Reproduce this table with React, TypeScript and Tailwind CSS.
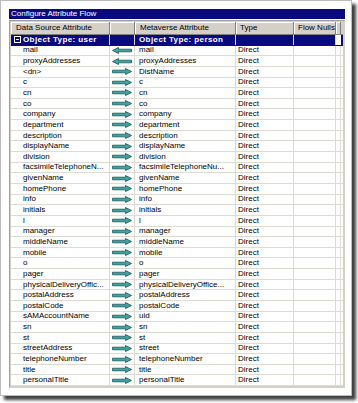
import React from 'react';

type Row = { ds: string; mv: string; dir: 'in' | 'out' };

const rows: Row[] = [
  { ds: 'mail', mv: 'mail', dir: 'in' },
  { ds: 'proxyAddresses', mv: 'proxyAddresses', dir: 'in' },
  { ds: '<dn>', mv: 'DistName', dir: 'out' },
  { ds: 'c', mv: 'c', dir: 'out' },
  { ds: 'cn', mv: 'cn', dir: 'out' },
  { ds: 'co', mv: 'co', dir: 'out' },
  { ds: 'company', mv: 'company', dir: 'out' },
  { ds: 'department', mv: 'department', dir: 'out' },
  { ds: 'description', mv: 'description', dir: 'out' },
  { ds: 'displayName', mv: 'displayName', dir: 'out' },
  { ds: 'division', mv: 'division', dir: 'out' },
  { ds: 'facsimileTelephoneN...', mv: 'facsimileTelephoneNu...', dir: 'out' },
  { ds: 'givenName', mv: 'givenName', dir: 'out' },
  { ds: 'homePhone', mv: 'homePhone', dir: 'out' },
  { ds: 'info', mv: 'info', dir: 'out' },
  { ds: 'initials', mv: 'initials', dir: 'out' },
  { ds: 'l', mv: 'l', dir: 'out' },
  { ds: 'manager', mv: 'manager', dir: 'out' },
  { ds: 'middleName', mv: 'middleName', dir: 'out' },
  { ds: 'mobile', mv: 'mobile', dir: 'out' },
  { ds: 'o', mv: 'o', dir: 'out' },
  { ds: 'pager', mv: 'pager', dir: 'out' },
  { ds: 'physicalDeliveryOffic...', mv: 'physicalDeliveryOffice...', dir: 'out' },
  { ds: 'postalAddress', mv: 'postalAddress', dir: 'out' },
  { ds: 'postalCode', mv: 'postalCode', dir: 'out' },
  { ds: 'sAMAccountName', mv: 'uid', dir: 'out' },
  { ds: 'sn', mv: 'sn', dir: 'out' },
  { ds: 'st', mv: 'st', dir: 'out' },
  { ds: 'streetAddress', mv: 'street', dir: 'out' },
  { ds: 'telephoneNumber', mv: 'telephoneNumber', dir: 'out' },
  { ds: 'title', mv: 'title', dir: 'out' },
  { ds: 'personalTitle', mv: 'personalTitle', dir: 'out' },
];

function Arrow({ dir }: { dir: 'in' | 'out' }) {
  return (
    <svg width="20" height="7" viewBox="0 0 20 7" className={dir === 'in' ? 'scale-x-[-1]' : ''}>
      <path d="M0.5 2.2H13.5V0.5L19.5 3.5L13.5 6.5V4.8H0.5Z" fill="#3fa3a3" stroke="#1d5656" strokeWidth="0.8" />
    </svg>
  );
}

function Header() {
  const cell = 'h-full flex items-center whitespace-nowrap overflow-hidden border-r border-[#808080] shadow-[inset_1px_1px_0_#fff]';
  return (
    <div className="flex h-[13px] bg-[#d4d0c8] text-black border-b border-[#808080]">
      <div className={`${cell} w-[99px] pl-[5px]`}>Data Source Attribute</div>
      <div className={`${cell} w-[25px]`} />
      <div className={`${cell} w-[101px] pl-[5px]`}>Metaverse Attribute</div>
      <div className={`${cell} w-[58px] pl-[4px]`}>Type</div>
      <div className={`${cell} w-[42px] pl-[4px]`}>Flow Nulls</div>
      <div className={`${cell} w-[5px]`} />
    </div>
  );
}

export default function App() {
  const cell = 'h-full flex items-center border-r border-[#dcdcd4] overflow-hidden whitespace-nowrap';
  return (
    <div className="w-[358px] h-[403px] bg-white font-['Liberation_Sans',Arial,sans-serif] text-[8px] leading-none">
      <div className="w-[352px] h-[396px] border border-[#bcbcbc] bg-white shadow-[4px_4px_3px_rgba(0,0,0,0.75)] pl-[8px] pt-[8px]">
        <div className="w-[336px] h-[10px] bg-[#0a0a80] text-white flex items-center pl-[2px]">
          Configure Attribute Flow
        </div>
        <div className="w-[336px] h-[368px] mt-[1px] border border-[#a0a0a0] border-r-[#d4d0c8] border-b-[#d4d0c8] bg-[#d4d0c8] p-[1px]">
          <div className="w-full h-full bg-white flex flex-col">
            <Header />
            <div className="flex h-[10.67px] bg-[#0a0a80] text-white font-bold border-b border-[#0a0a80]">
              <div className="h-full w-[99px] flex items-center gap-[2px] pl-[3px] border-r border-[#dcdcd4]">
                <span className="w-[7px] h-[7px] border border-white flex items-center justify-center">
                  <span className="w-[3px] h-px bg-white" />
                </span>
                <span className="tracking-[0.4px]">Object Type: user</span>
              </div>
              <div className="h-full w-[25px] border-r border-[#dcdcd4]" />
              <div className="h-full w-[101px] flex items-center pl-[4px] border-r border-[#dcdcd4] tracking-[0.4px]">
                Object Type: person
              </div>
              <div className="h-full w-[58px] border-r border-[#dcdcd4]" />
              <div className="h-full w-[42px] border-r border-[#e8e0a0]" />
              <div className="h-full w-[5px] bg-white" />
            </div>
            {rows.map((r, i) => (
              <div key={i} className="flex h-[10.67px] text-black border-b border-[#dcdcd4]">
                <div className={`${cell} w-[99px] pl-[12px]`}>{r.ds}</div>
                <div className={`${cell} w-[25px] justify-center`}>
                  <Arrow dir={r.dir} />
                </div>
                <div className={`${cell} w-[101px] pl-[4px]`}>{r.mv}</div>
                <div className={`${cell} w-[58px] pl-[2px]`}>Direct</div>
                <div className={`${cell} w-[42px]`} />
                <div className={`${cell} w-[5px]`} />
              </div>
            ))}
          </div>
        </div>
      </div>
    </div>
  );
}
